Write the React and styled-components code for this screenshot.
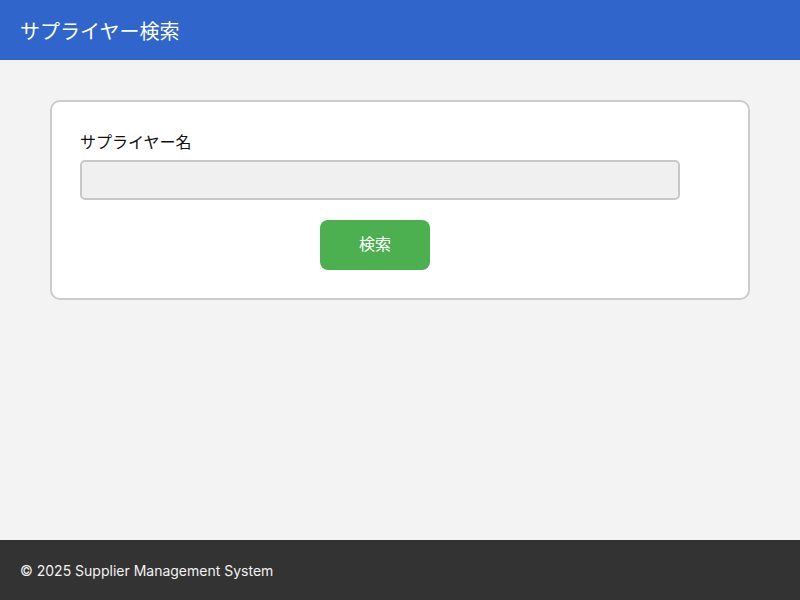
import React from "react";
import styled, { createGlobalStyle } from "styled-components";

const Global = createGlobalStyle`
  html, body { margin: 0; padding: 0; }
  body {
    font-family: Inter, "Noto Sans CJK JP", sans-serif;
    background: #f3f3f3;
  }
  * { box-sizing: border-box; }
`;

const Page = styled.div`
  display: flex;
  flex-direction: column;
  min-height: 600px;
`;

const Header = styled.header`
  height: 60px;
  background: #3066cc;
  color: #fff;
  display: flex;
  align-items: center;
  padding: 0 20px;
`;

const Title = styled.h1`
  margin: 0;
  font-size: 20px;
  font-weight: 400;
`;

const Main = styled.main`
  flex: 1;
  padding: 40px 50px;
`;

const Card = styled.section`
  background: #fff;
  border: 2px solid #cccccc;
  border-radius: 10px;
  padding: 28px;
  display: flex;
  flex-direction: column;
`;

const Label = styled.label`
  font-size: 16px;
  line-height: 24px;
  color: #111;
  margin-bottom: 6px;
`;

const Input = styled.input`
  width: 600px;
  height: 40px;
  background: #f0f0f0;
  border: 2px solid #c8c8c8;
  border-radius: 5px;
  font-size: 16px;
  padding: 0 10px;
  outline: none;
`;

const ButtonRow = styled.div`
  width: 590px;
  display: flex;
  justify-content: center;
  margin-top: 20px;
`;

const Button = styled.button`
  width: 110px;
  height: 50px;
  padding: 0 0 5px;
  background: #4caf50;
  color: #fff;
  border: none;
  border-radius: 8px;
  font-family: Inter, "Noto Sans CJK JP", sans-serif;
  font-size: 16px;
  cursor: pointer;
`;

const Footer = styled.footer`
  height: 60px;
  background: #333333;
  color: #f2f2f2;
  display: flex;
  align-items: center;
  padding: 0 20px;
  font-size: 14px;
`;

export default function App() {
  return (
    <>
      <Global />
      <Page>
        <Header>
          <Title>サプライヤー検索</Title>
        </Header>
        <Main>
          <Card>
            <Label htmlFor="supplier">サプライヤー名</Label>
            <Input id="supplier" type="text" />
            <ButtonRow>
              <Button type="button">検索</Button>
            </ButtonRow>
          </Card>
        </Main>
        <Footer>© 2025 Supplier Management System</Footer>
      </Page>
    </>
  );
}
